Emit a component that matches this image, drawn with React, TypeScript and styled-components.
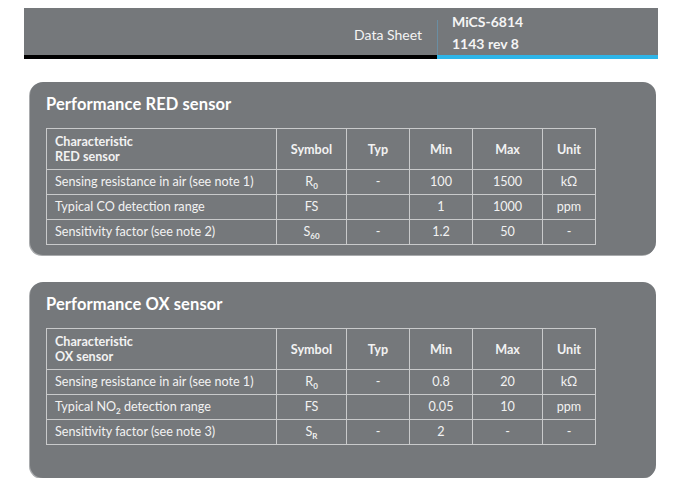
import * as React from 'react';
import styled, { createGlobalStyle } from 'styled-components';

const GlobalStyle = createGlobalStyle`
  *, *::before, *::after {
    box-sizing: border-box;
  }
  body {
    margin: 8px 0 0 0;
    background: #ffffff;
    font-family: Lato, 'Liberation Sans', sans-serif;
  }
`;

const Page = styled.div`
  width: 680px;
  padding-left: 24px;
`;

const Header = styled.div`
  width: 634px;
  height: 51px;
  display: flex;
  background: #75787b;
  color: #f4f4f4;
`;

const HeaderLeft = styled.div`
  width: 413px;
  display: flex;
  justify-content: flex-end;
  align-items: flex-end;
  padding: 0 15px 12px 0;
  border-bottom: 4px solid #000000;
  font-size: 14px;
`;

const HeaderRight = styled.div`
  flex: 1;
  display: flex;
  flex-direction: column;
  padding: 3px 0 0 15px;
  border-bottom: 4px solid #2eb5e8;
  position: relative;
  font-size: 14px;
  font-weight: 700;
  line-height: 22px;

  &::before {
    content: '';
    position: absolute;
    left: 0;
    top: 12px;
    bottom: 0;
    width: 1px;
    background: #6a8ea3;
  }
`;

const Panel = styled.section<{ $bottom: number }>`
  margin: ${(p) => (p.$bottom > 20 ? '27px' : '23px')} 0 0 6px;
  width: 626px;
  background: #75787b;
  border-radius: 13px;
  padding: 11px 16px ${(p) => p.$bottom}px 16px;
  box-shadow: -1px 1px 0 #a9abad;
`;

const Title = styled.h2`
  margin: 0 0 13px 0;
  font-size: 16.5px;
  font-weight: 700;
  color: #ffffff;
  line-height: 22px;
  letter-spacing: 0.1px;
`;

const Table = styled.table`
  border-collapse: collapse;
  color: #f2f2f2;
  font-size: 12.6px;
  table-layout: fixed;
  width: 549px;

  td,
  th {
    border: 1px solid #c9cacb;
    padding: 0 8px;
  }
`;

const HeadCell = styled.th<{ $left?: boolean }>`
  height: 41px;
  font-weight: 700;
  text-align: ${(p) => (p.$left ? 'left' : 'center')};
  line-height: 15px;
`;

const Cell = styled.td<{ $left?: boolean }>`
  height: 25px;
  text-align: ${(p) => (p.$left ? 'left' : 'center')};
  line-height: 14px;
`;

const Sub = styled.sub`
  font-size: 8px;
  font-weight: 700;
  vertical-align: -3px;
  line-height: 0;
`;

type Row = {
  label: React.ReactNode;
  symbol: React.ReactNode;
  typ: string;
  min: string;
  max: string;
  unit: string;
};

const widths = [230, 70, 63, 63, 70, 53];

const SensorTable = ({ kind, rows }: { kind: string; rows: Row[] }) => (
  <Table>
    <colgroup>
      {widths.map((w, i) => (
        <col key={i} style={{ width: w }} />
      ))}
    </colgroup>
    <thead>
      <tr>
        <HeadCell $left>
          Characteristic
          <br />
          {kind} sensor
        </HeadCell>
        <HeadCell>Symbol</HeadCell>
        <HeadCell>Typ</HeadCell>
        <HeadCell>Min</HeadCell>
        <HeadCell>Max</HeadCell>
        <HeadCell>Unit</HeadCell>
      </tr>
    </thead>
    <tbody>
      {rows.map((r, i) => (
        <tr key={i}>
          <Cell $left>{r.label}</Cell>
          <Cell>{r.symbol}</Cell>
          <Cell>{r.typ}</Cell>
          <Cell>{r.min}</Cell>
          <Cell>{r.max}</Cell>
          <Cell>{r.unit}</Cell>
        </tr>
      ))}
    </tbody>
  </Table>
);

const redRows: Row[] = [
  { label: 'Sensing resistance in air (see note 1)', symbol: <>R<Sub>0</Sub></>, typ: '-', min: '100', max: '1500', unit: 'kΩ' },
  { label: 'Typical CO detection range', symbol: 'FS', typ: '', min: '1', max: '1000', unit: 'ppm' },
  { label: 'Sensitivity factor (see note 2)', symbol: <>S<Sub>60</Sub></>, typ: '-', min: '1.2', max: '50', unit: '-' },
];

const oxRows: Row[] = [
  { label: 'Sensing resistance in air (see note 1)', symbol: <>R<Sub>0</Sub></>, typ: '-', min: '0.8', max: '20', unit: 'kΩ' },
  { label: <>Typical NO<Sub>2</Sub> detection range</>, symbol: 'FS', typ: '', min: '0.05', max: '10', unit: 'ppm' },
  { label: 'Sensitivity factor (see note 3)', symbol: <>S<Sub>R</Sub></>, typ: '-', min: '2', max: '-', unit: '-' },
];

export default function App() {
  return (
    <Page>
      <GlobalStyle />
      <Header>
        <HeaderLeft>Data Sheet</HeaderLeft>
        <HeaderRight>
          <span>MiCS-6814</span>
          <span>1143 rev 8</span>
        </HeaderRight>
      </Header>
      <Panel $bottom={10}>
        <Title>Performance RED sensor</Title>
        <SensorTable kind="RED" rows={redRows} />
      </Panel>
      <Panel $bottom={33}>
        <Title>Performance OX sensor</Title>
        <SensorTable kind="OX" rows={oxRows} />
      </Panel>
    </Page>
  );
}
